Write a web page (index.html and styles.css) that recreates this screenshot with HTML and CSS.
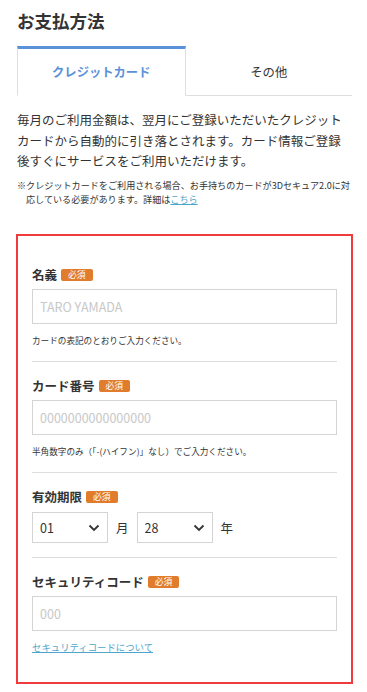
FILE: index.html
```html
<!DOCTYPE html>
<html lang="ja">
<head>
    <meta charset="UTF-8">
    <meta name="viewport" content="width=device-width, initial-scale=1.0">
    <title>お支払方法</title>
    <link rel="stylesheet" href="styles.css">
</head>
<body>
    <div class="page">
        <h1 class="page-title">お支払方法</h1>

        <div class="tabs">
            <div class="tab active">クレジットカード</div>
            <div class="tab">その他</div>
        </div>

        <p class="lead">毎月のご利用金額は、翌月にご登録いただいたクレジットカードから自動的に引き落とされます。カード情報ご登録後すぐにサービスをご利用いただけます。</p>
        <p class="note">※クレジットカードをご利用される場合、お手持ちのカードが3Dセキュア2.0に対応している必要があります。詳細は<a href="#">こちら</a></p>

        <form class="card-form">
            <div class="field">
                <div class="field-label">名義<span class="required">必須</span></div>
                <input type="text" class="text-input" placeholder="TARO YAMADA">
                <p class="help">カードの表記のとおりご入力ください。</p>
            </div>

            <div class="field">
                <div class="field-label">カード番号<span class="required">必須</span></div>
                <input type="text" class="text-input" placeholder="0000000000000000">
                <p class="help">半角数字のみ（「-(ハイフン)」なし）でご入力ください。</p>
            </div>

            <div class="field">
                <div class="field-label">有効期限<span class="required">必須</span></div>
                <div class="expiry">
                    <div class="select-wrap">
                        <select class="select">
                            <option>01</option>
                        </select>
                        <svg class="chevron" width="12" height="8" viewBox="0 0 12 8"><path d="M1.5 1.5 L6 6 L10.5 1.5" fill="none" stroke="#333" stroke-width="1.8"/></svg>
                    </div>
                    <span class="unit">月</span>
                    <div class="select-wrap">
                        <select class="select">
                            <option>28</option>
                        </select>
                        <svg class="chevron" width="12" height="8" viewBox="0 0 12 8"><path d="M1.5 1.5 L6 6 L10.5 1.5" fill="none" stroke="#333" stroke-width="1.8"/></svg>
                    </div>
                    <span class="unit">年</span>
                </div>
            </div>

            <div class="field last">
                <div class="field-label">セキュリティコード<span class="required">必須</span></div>
                <input type="text" class="text-input" placeholder="000">
                <a href="#" class="help-link">セキュリティコードについて</a>
            </div>
        </form>
    </div>
</body>
</html>
```

FILE: styles.css
```css
:root {
    --text-color: #333;
    --tab-blue: #5b91d9;
    --border-gray: #d4d4d4;
    --line-gray: #dedede;
    --badge-orange: #e07c2b;
    --link-blue: #4ea6cc;
    --alert-red: #ef3b3b;
}

body {
    margin: 0;
    background-color: white;
    color: var(--text-color);
    font-family: "Noto Sans CJK JP", "Noto Sans", sans-serif;
}

.page {
    padding: 0 15px 0 17px;
}

.page-title {
    margin: 0;
    padding-top: 8px;
    font-size: 17.5px;
    line-height: 26px;
    font-weight: 700;
}

.tabs {
    display: flex;
    margin-top: 12px;
}

.tab {
    flex: 1;
    height: 46px;
    display: flex;
    align-items: center;
    justify-content: center;
    font-size: 12.3px;
    border-top: 3px solid transparent;
    border-bottom: 1px solid var(--line-gray);
}

.tab.active {
    color: var(--tab-blue);
    font-weight: 700;
    border-top-color: var(--tab-blue);
    border-left: 1px solid var(--line-gray);
    border-right: 1px solid var(--line-gray);
    border-bottom-color: transparent;
}

.lead {
    margin: 14px 0 0;
    font-size: 12.5px;
    line-height: 20.5px;
}

.note {
    margin: 7.5px 0 0;
    padding-left: 9px;
    text-indent: -9px;
    font-size: 9.1px;
    line-height: 13.5px;
}

.note a,
.help-link {
    color: var(--link-blue);
}

.card-form {
    margin: 27.5px -1px 0 -1px;
    padding: 30px 14px 26px;
    border: 2px solid var(--alert-red);
}

.field {
    padding: 15px 0 14px;
    border-bottom: 1px solid var(--line-gray);
}

.field:first-child {
    padding-top: 0;
}

.field.last {
    border-bottom: none;
    padding-bottom: 0;
}

.field-label {
    display: flex;
    align-items: center;
    font-size: 12.5px;
    line-height: 18px;
    font-weight: 700;
}

.required {
    margin-left: 4px;
    padding: 0 7px;
    height: 12px;
    line-height: 12px;
    border-radius: 2px;
    background-color: var(--badge-orange);
    color: white;
    font-size: 8.8px;
    font-weight: 400;
}

.text-input {
    display: block;
    box-sizing: border-box;
    width: 100%;
    height: 35px;
    margin-top: 5px;
    padding: 0 7px;
    border: 1px solid var(--border-gray);
    border-radius: 0;
    font-family: inherit;
    font-size: 12.5px;
    color: var(--text-color);
}

.text-input::placeholder {
    color: #c8c8c8;
}

.help {
    margin: 9px 0 0;
    font-size: 8.6px;
    line-height: 14px;
}

.help-link {
    display: inline-block;
    margin-top: 9px;
    font-size: 9.4px;
    line-height: 14px;
}

.expiry {
    display: flex;
    align-items: center;
    gap: 8px;
    margin-top: 6px;
}

.select-wrap {
    position: relative;
    width: 76px;
}

.select {
    display: block;
    box-sizing: border-box;
    width: 100%;
    height: 31px;
    padding: 0 7px;
    border: 1px solid var(--border-gray);
    border-radius: 0;
    background-color: white;
    appearance: none;
    font-family: inherit;
    font-size: 12.5px;
    color: var(--text-color);
}

.chevron {
    position: absolute;
    right: 8px;
    top: 12px;
    pointer-events: none;
}

.unit {
    font-size: 12.5px;
}
```
